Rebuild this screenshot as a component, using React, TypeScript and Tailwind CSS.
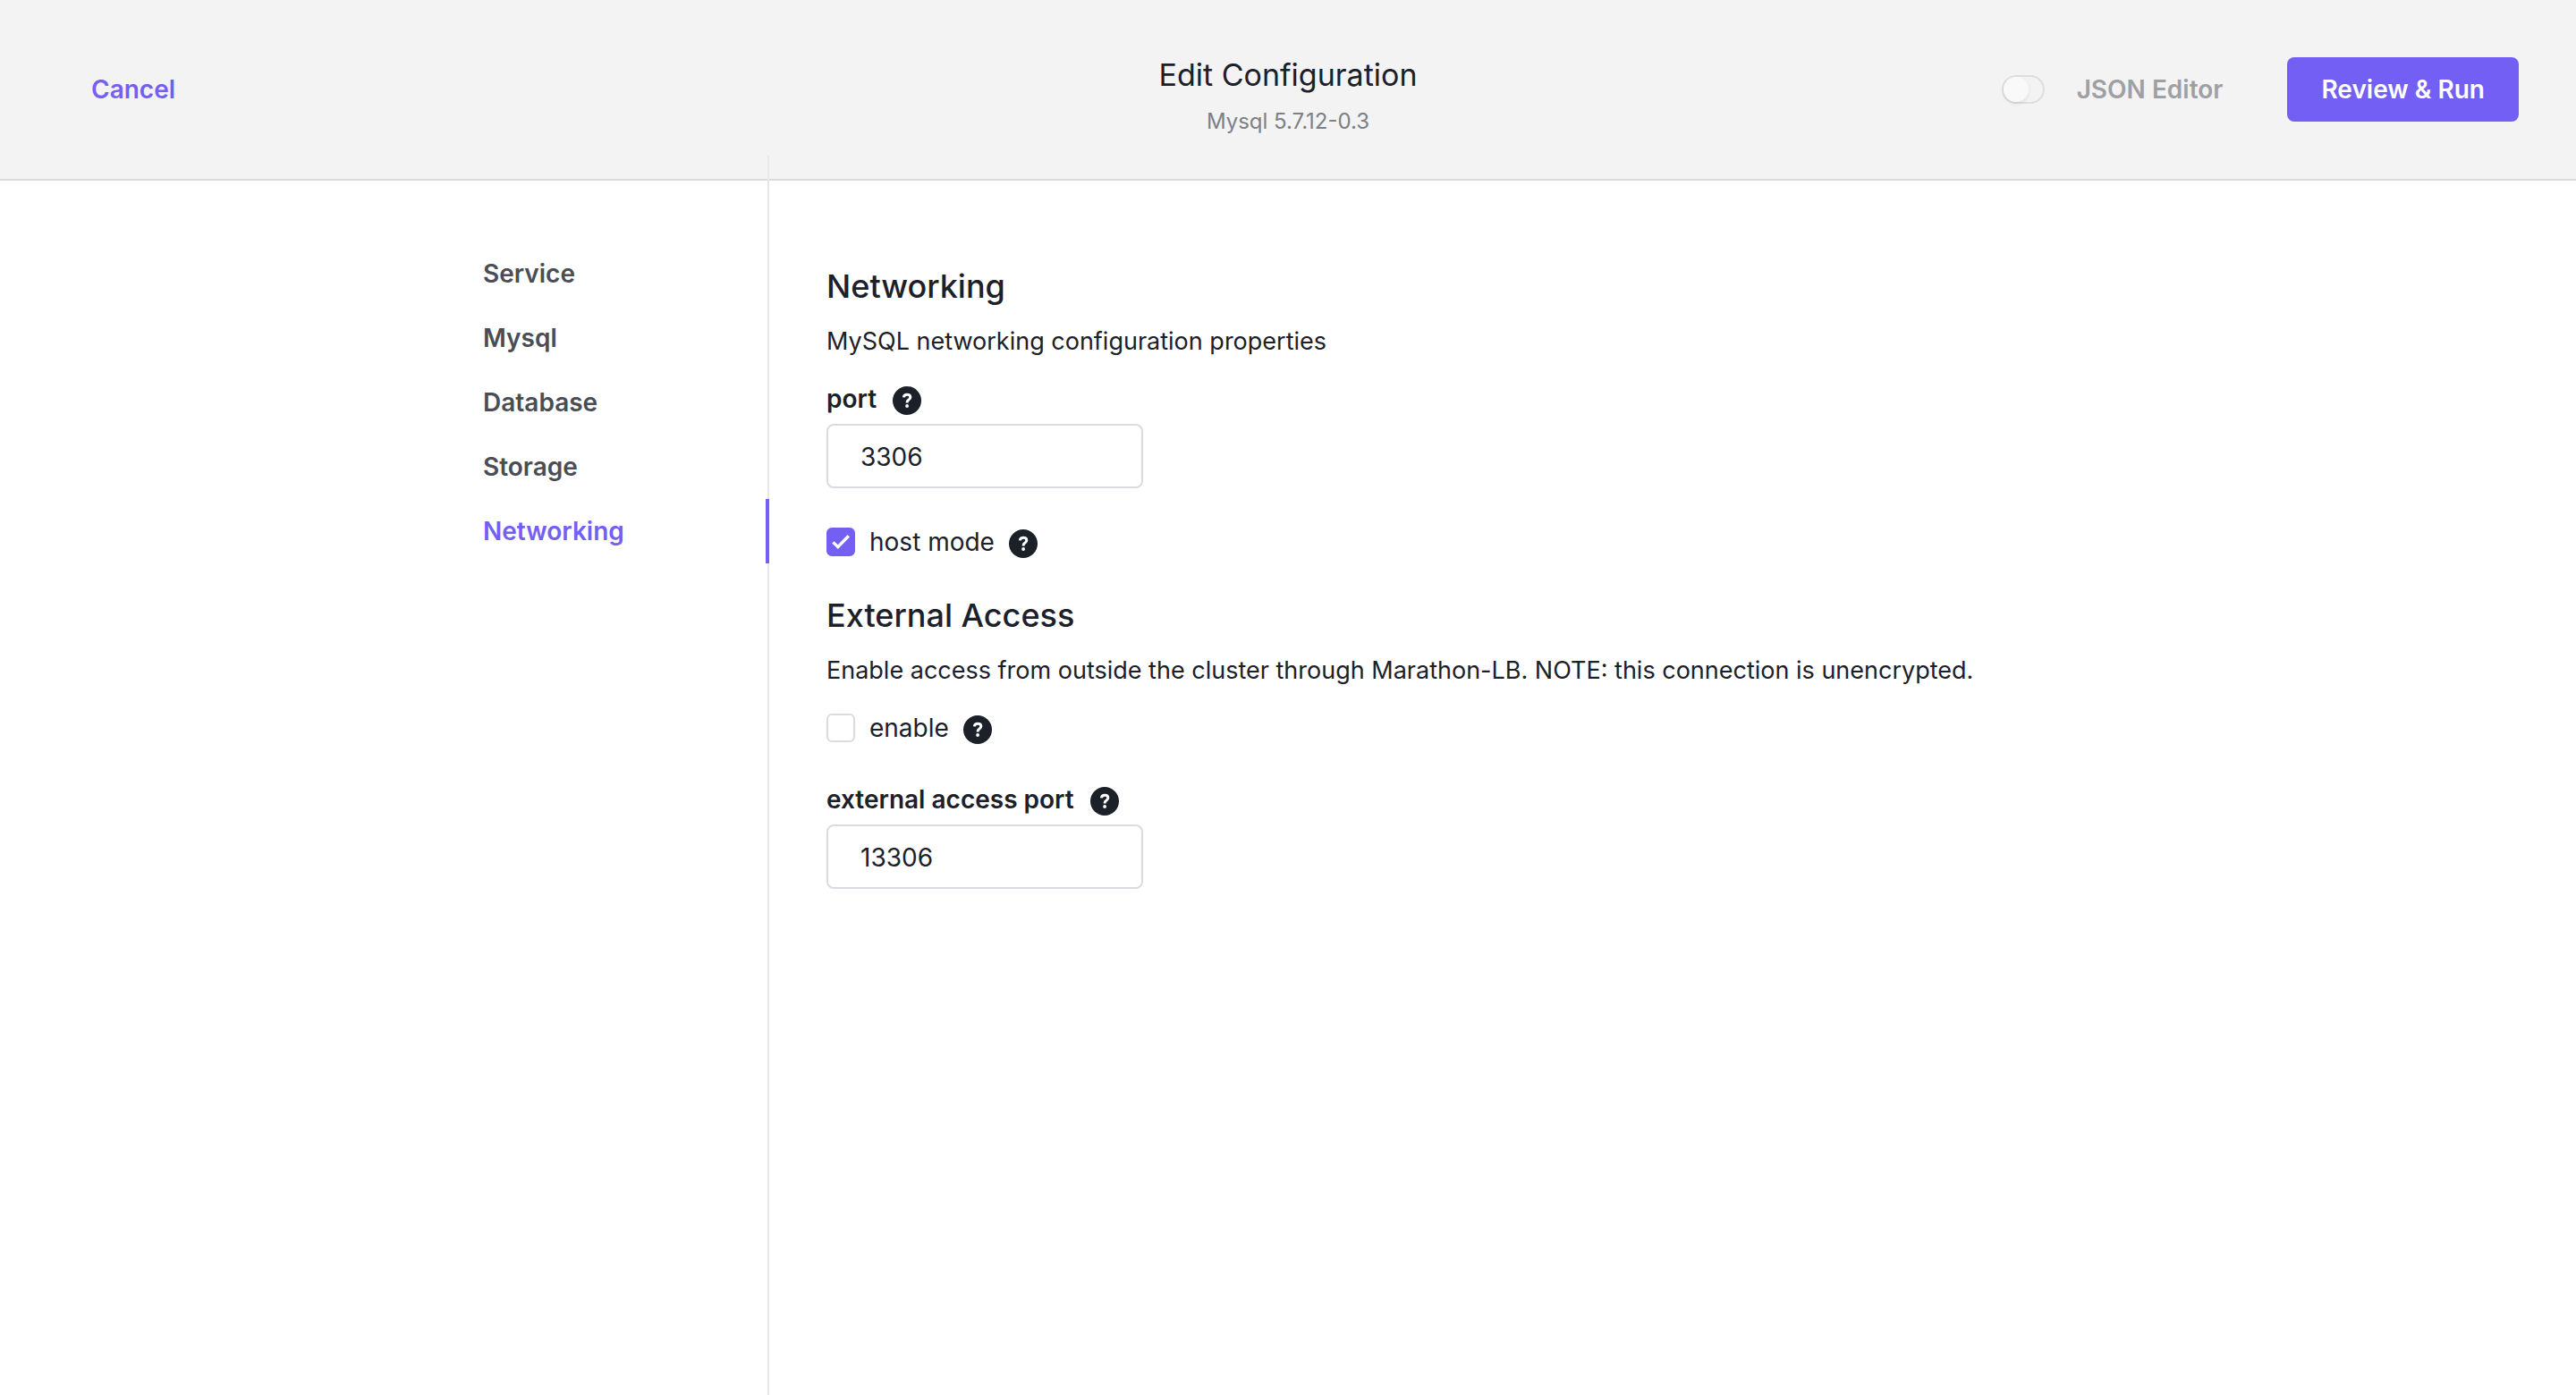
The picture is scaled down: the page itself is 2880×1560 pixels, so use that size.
import { useState } from "react";

const SECTIONS = ["Service", "Mysql", "Database", "Storage", "Networking"];

function HelpIcon({ topic }: { topic: string }) {
  return (
    <button type="button" aria-label={`Help: ${topic}`} className="mt-1 size-8 shrink-0">
      <svg viewBox="0 0 32 32" className="size-8" aria-hidden="true">
        <circle cx="16" cy="16" r="16" fill="#1b2029" />
        <path
          d="M12.4 12.4C12.5 10.4 13.9 9.3 16.1 9.3c2.2 0 3.7 1.1 3.7 2.9 0 1.3-.7 2-1.8 2.8-1.3.9-1.8 1.4-1.8 2.5v1.1"
          fill="none"
          stroke="#fff"
          strokeWidth="3"
        />
        <circle cx="16.1" cy="22" r="1.9" fill="#fff" />
      </svg>
    </button>
  );
}

function NumberField({ id, label, initial }: { id: string; label: string; initial: string }) {
  const [value, setValue] = useState(initial);
  return (
    <div>
      <div className="flex h-10 items-center gap-4.5">
        <label htmlFor={id} className="text-[28px] leading-10 font-semibold">
          {label}
        </label>
        <HelpIcon topic={label} />
      </div>
      <input
        id={id}
        type="text"
        inputMode="numeric"
        value={value}
        onChange={(e) => setValue(e.target.value)}
        className="mt-2 block h-18 w-[354px] rounded-lg border-2 border-[#dadae2] bg-white px-9 pt-0.5 text-[28px] outline-none focus:border-[#745ff5]"
      />
    </div>
  );
}

function CheckField({ id, label, initial }: { id: string; label: string; initial: boolean }) {
  const [checked, setChecked] = useState(initial);
  return (
    <div className="flex h-10 items-center gap-4">
      <span className="relative size-8">
        <input
          id={id}
          type="checkbox"
          checked={checked}
          onChange={(e) => setChecked(e.target.checked)}
          className="block size-8 appearance-none rounded-md border-2 border-[#dadae2] bg-white checked:border-[#745ff5] checked:bg-[#745ff5]"
        />
        {checked && (
          <svg viewBox="0 0 32 32" className="pointer-events-none absolute inset-0 size-8" aria-hidden="true">
            <path d="M7.4 16.4l5.4 5.2L24.8 9.2" fill="none" stroke="#fff" strokeWidth="3.4" />
          </svg>
        )}
      </span>
      <label htmlFor={id} className="text-[28px] leading-10">
        {label}
      </label>
      <HelpIcon topic={label} />
    </div>
  );
}

export default function App() {
  const [active, setActive] = useState("Networking");
  const [json, setJson] = useState(false);

  return (
    <div className="flex min-h-screen flex-col bg-white font-['Inter',sans-serif] text-[#1b2029]">
      <header className="grid grid-cols-[1fr_auto_1fr] items-start border-b-2 border-[#dadada] bg-[#f3f3f3] px-16 pt-16 pb-13">
        <button type="button" className="h-18 justify-self-start px-[38px] text-[28px] font-semibold text-[#745ff5]">
          Cancel
        </button>
        <div className="-my-1 text-center">
          <h1 className="text-[34px] leading-12">Edit Configuration</h1>
          <p className="mt-3 text-[24px] leading-8 text-[#7d8085]">Mysql 5.7.12-0.3</p>
        </div>
        <div className="flex items-center justify-self-end">
          <label className="flex items-center gap-9 text-[28px] font-semibold text-[#9fa0a4]">
            <span className="relative h-8 w-12">
              <input
                type="checkbox"
                role="switch"
                checked={json}
                onChange={(e) => setJson(e.target.checked)}
                className="peer block h-8 w-12 appearance-none rounded-full border-2 border-[#dedede] bg-[#f3f3f3] checked:bg-[#745ff5]"
              />
              <span className="pointer-events-none absolute top-0.5 left-0.5 size-7 rounded-full bg-[#f9f9f9] shadow-[0_2px_4px_rgba(0,0,0,0.08)] peer-checked:left-4.5" />
            </span>
            JSON Editor
          </label>
          <button type="button" className="ml-18 h-18 rounded-lg bg-[#745ff5] px-[38px] text-[28px] font-semibold text-white">
            Review &amp; Run
          </button>
        </div>
      </header>

      <div className="mx-auto flex w-full max-w-[1800px] grow">
        <nav aria-label="Sections" className="relative -mt-7 w-80 shrink-0 border-r-2 border-[#e8e8e8] pt-24">
          <ul>
            {SECTIONS.map((name) => (
              <li key={name} className="-mr-0.5">
                <button
                  type="button"
                  aria-current={name === active ? "page" : undefined}
                  onClick={() => setActive(name)}
                  className={
                    name === active
                      ? "flex h-18 w-full items-center border-r-4 border-[#745ff5] text-[28px] font-semibold text-[#745ff5]"
                      : "flex h-18 w-full items-center text-[28px] font-semibold text-[#4a4d54]"
                  }
                >
                  {name}
                </button>
              </li>
            ))}
          </ul>
        </nav>

        <main className="min-w-0 grow pt-24 pl-16">
          <section>
            <h2 className="text-[36px] leading-11 font-medium">Networking</h2>
            <p className="mt-5 text-[27px] leading-10">MySQL networking configuration properties</p>
            <div className="mt-6">
              <NumberField id="port" label="port" initial="3306" />
            </div>
            <div className="mt-10">
              <CheckField id="host-mode" label="host mode" initial={true} />
            </div>
          </section>
          <section className="mt-10">
            <h2 className="text-[36px] leading-11 font-medium">External Access</h2>
            <p className="mt-5 text-[27px] leading-10">
              Enable access from outside the cluster through Marathon-LB. NOTE: this connection is unencrypted.
            </p>
            <div className="mt-6">
              <CheckField id="enable" label="enable" initial={false} />
            </div>
            <div className="mt-10">
              <NumberField id="external-port" label="external access port" initial="13306" />
            </div>
          </section>
        </main>
      </div>
    </div>
  );
}
